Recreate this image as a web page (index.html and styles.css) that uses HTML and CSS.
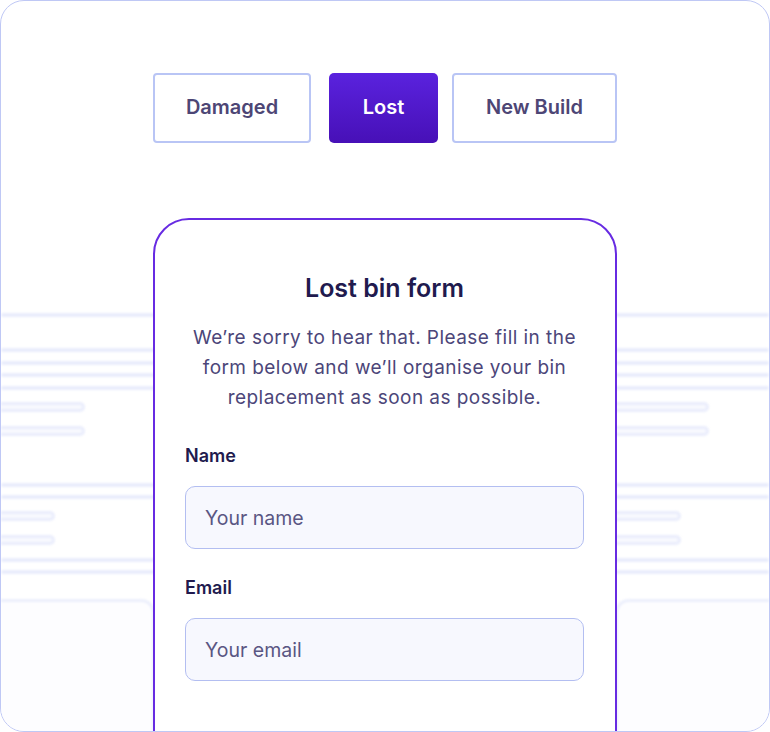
FILE: index.html
```html
<!DOCTYPE html>
<html lang="en">
<head>
<meta charset="utf-8">
<title>Lost bin form</title>
<link rel="stylesheet" href="styles.css">
</head>
<body>
<div class="frame">
  <div class="backdrop" aria-hidden="true">
    <div class="ln"></div>
    <div class="group g1">
      <div class="ln"></div>
      <div class="ln"></div>
      <div class="ln"></div>
      <div class="ln"></div>
    </div>
    <div class="pills p1">
      <div class="pill-row"><span class="pill left"></span><span class="pill right"></span></div>
      <div class="pill-row"><span class="pill left"></span><span class="pill right"></span></div>
    </div>
    <div class="group g2">
      <div class="ln"></div>
      <div class="ln"></div>
    </div>
    <div class="pills p2">
      <div class="pill-row"><span class="pill left"></span><span class="pill right"></span></div>
      <div class="pill-row"><span class="pill left"></span><span class="pill right"></span></div>
    </div>
    <div class="group g3">
      <div class="ln"></div>
      <div class="ln"></div>
    </div>
    <div class="boxes">
      <div class="box left"></div>
      <div class="box right"></div>
    </div>
  </div>

  <div class="tabs">
    <button class="tab tab-damaged">Damaged</button>
    <button class="tab tab-lost active">Lost</button>
    <button class="tab tab-new">New Build</button>
  </div>

  <div class="card">
    <h1 class="title">Lost bin form</h1>
    <p class="intro">We’re sorry to hear that. Please fill in the form below and we’ll organise your bin replacement as soon as possible.</p>
    <label class="label" for="name">Name</label>
    <input class="field" id="name" type="text" placeholder="Your name">
    <label class="label label-email" for="email">Email</label>
    <input class="field" id="email" type="email" placeholder="Your email">
  </div>
</div>
</body>
</html>
```
FILE: styles.css
```css
* { box-sizing: border-box; }
html, body { margin: 0; padding: 0; background: #ffffff; }
body { font-family: Inter, "Noto Sans", sans-serif; }

.frame {
  position: relative;
  width: 770px;
  height: 732px;
  border: 1px solid #bfc8f5;
  border-radius: 24px;
  overflow: hidden;
  background: #ffffff;
  display: flex;
  flex-direction: column;
  align-items: center;
}

/* blurred decorative layer behind the card */
.backdrop {
  position: absolute;
  top: 312px;
  left: 0;
  right: 0;
  bottom: 0;
  display: flex;
  flex-direction: column;
  filter: blur(1.3px);
  z-index: 0;
}
.ln { height: 4px; background: #eaedfc; border-radius: 2px; }
.group { display: flex; flex-direction: column; }
.g1 { margin-top: 31px; gap: 8.5px; }
.g2 { margin-top: 47px; gap: 8px; }
.g3 { margin-top: 13px; gap: 8px; }
.pills { display: flex; flex-direction: column; gap: 14px; }
.p1 { margin-top: 12px; }
.p2 { margin-top: 12px; }
.pill-row { display: flex; justify-content: space-between; height: 10px; }
.pill {
  display: block;
  height: 10px;
  border: 3px solid #eaedfc;
  background: #f8f9fe;
}
.p1 .pill.left { width: 84px; border-left: none; border-radius: 0 6px 6px 0; }
.p1 .pill.right { width: 150px; margin-right: 60px; border-radius: 6px; }
.p2 .pill.left { width: 54px; border-left: none; border-radius: 0 6px 6px 0; }
.p2 .pill.right { width: 150px; margin-right: 88px; border-radius: 6px; }

.boxes { margin-top: 25px; display: flex; justify-content: space-between; flex: 1; }
.box { width: 154px; border-top: 3px solid #eceffc; background: #fdfdff; }
.box.left { border-right: 3px solid #eceffc; border-top-right-radius: 14px; }
.box.right { border-left: 3px solid #eceffc; border-top-left-radius: 14px; }

/* tabs */
.tabs {
  position: relative;
  z-index: 1;
  display: flex;
  margin-top: 72px;
}
.tab {
  height: 70px;
  border: 2px solid #b9c5f5;
  border-radius: 4px;
  background: #ffffff;
  color: #4d4675;
  font-family: Inter, "Noto Sans", sans-serif;
  font-weight: 600;
  font-size: 20px;
  padding: 0 0 2px;
  cursor: pointer;
}
.tab-damaged { width: 158px; }
.tab-lost { width: 109px; margin-left: 18px; }
.tab-new { width: 165px; margin-left: 14px; }
.tab.active {
  border: none;
  border-radius: 5px;
  color: #ffffff;
  background: linear-gradient(180deg, #5a22de 0%, #4710b7 100%);
}

/* card */
.card {
  position: relative;
  z-index: 1;
  margin-top: 75px;
  width: 464px;
  flex-shrink: 0;
  height: 560px;
  border: 2px solid #672be2;
  border-radius: 36px 36px 0 0;
  background: #ffffff;
  padding: 52px 31px 0 30px;
  display: flex;
  flex-direction: column;
}
.title {
  margin: 0;
  text-align: center;
  font-size: 25px;
  line-height: 32px;
  font-weight: 600;
  color: #211a4e;
}
.intro {
  margin: 19px 0 0;
  text-align: center;
  font-size: 19px;
  letter-spacing: 0.45px;
  line-height: 30px;
  color: #4c4679;
}
.label {
  margin-top: 31px;
  font-size: 18px;
  line-height: 24px;
  font-weight: 600;
  color: #211a4e;
}
.label-email { margin-top: 27px; }
.field {
  margin-top: 18px;
  width: 399px;
  height: 63px;
  border: 1px solid #b3bef1;
  border-radius: 10px;
  background: #f7f8fe;
  padding: 0 19px;
  font-family: Inter, "Noto Sans", sans-serif;
  font-size: 19.5px;
  color: #3d3868;
  outline: none;
}
.field::placeholder { color: #5a5683; opacity: 1; }
```
